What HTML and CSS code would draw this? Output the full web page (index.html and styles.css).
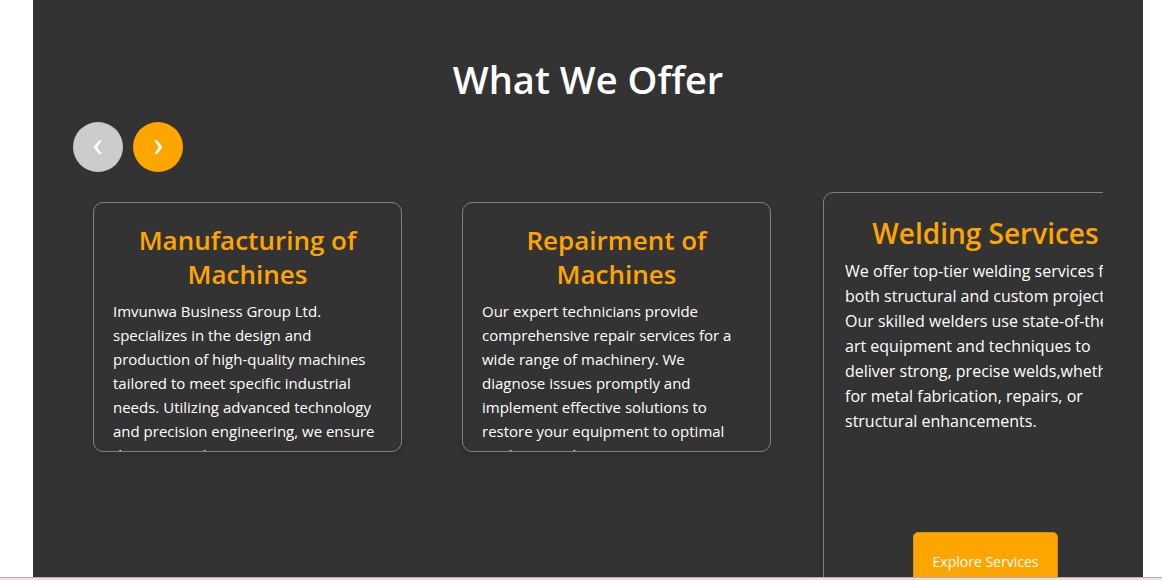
FILE: index.html
```html
<!DOCTYPE html>
<html lang="en">
<head>
<meta charset="utf-8">
<title>What We Offer</title>
<link rel="stylesheet" href="styles.css">
</head>
<body>
<main class="page">
  <section class="offer">
    <h2 class="offer-title">What We Offer</h2>
    <div class="controls">
      <button class="arrow arrow-off" type="button" aria-label="Previous">
        <svg width="10" height="16" viewBox="0 0 10 16"><path d="M6 1.3H8.8L4.2 8.2L8.8 15H6L1 8.8V7.6z"/></svg>
      </button>
      <button class="arrow" type="button" aria-label="Next">
        <svg width="10" height="16" viewBox="0 0 10 16"><path d="M4 1.3H1.2L5.8 8.2L1.2 15H4L9 8.8V7.6z"/></svg>
      </button>
    </div>
    <div class="track">
      <article class="card">
        <h3 class="card-title">Manufacturing of Machines</h3>
        <p class="card-text">Imvunwa Business Group Ltd.<br>specializes in the design and<br>production of high-quality machines<br>tailored to meet specific industrial<br>needs. Utilizing advanced technology<br>and precision engineering, we ensure<br>that our machines are</p>
      </article>
      <article class="card">
        <h3 class="card-title">Repairment of Machines</h3>
        <p class="card-text">Our expert technicians provide<br>comprehensive repair services for a<br>wide range of machinery. We<br>diagnose issues promptly and<br>implement effective solutions to<br>restore your equipment to optimal<br>working condition, minimizing</p>
      </article>
      <article class="card card-active">
        <h3 class="card-title">Welding Services</h3>
        <p class="card-text">We offer top-tier welding services for<br>both structural and custom projects.<br>Our skilled welders use state-of-the-<br>art equipment and techniques to<br>deliver strong, precise welds,whether<br>for metal fabrication, repairs, or<br>structural enhancements.</p>
        <button class="explore" type="button">Explore Services</button>
      </article>
    </div>
  </section>
</main>
<div class="edge"></div>
</body>
</html>
```
FILE: styles.css
```css
* { box-sizing: border-box; }
body {
  margin: 0;
  height: 100vh;
  display: flex;
  flex-direction: column;
  overflow: hidden;
  background: #fff;
  font-family: "Segoe UI", "Open Sans", "Noto Sans", sans-serif;
  color: #fff;
}
.page {
  flex: 1;
  min-height: 0;
  overflow: hidden;
  padding: 0 19px 0 33px;
}
.offer {
  background: #333;
  padding: 55px 40px 40px;
}
.offer-title {
  margin: 0;
  font-size: 38px;
  line-height: 48px;
  font-weight: 600;
  text-align: center;
}
.controls {
  display: flex;
  gap: 10px;
  margin-top: 19px;
}
.arrow {
  display: grid;
  place-items: center;
  width: 50px;
  height: 50px;
  padding: 0;
  border: 0;
  border-radius: 50%;
  background: orange;
}
.arrow svg { fill: #fff; }
.arrow-off { background: #ccc; }
.track {
  display: flex;
  align-items: flex-start;
  gap: 60px;
  overflow: hidden;
  margin-top: 10px;
  padding: 20px;
}
.card {
  flex: 0 0 309px;
  height: 250px;
  overflow: hidden;
  padding: 20px 19px;
  border: 1px solid #808080;
  border-radius: 10px;
  box-shadow: 0 4px 8px rgba(0, 0, 0, 0.1);
}
.card-title {
  margin: 0 0 8px;
  font-size: 26px;
  line-height: 34px;
  font-weight: 600;
  text-align: center;
  color: orange;
}
.card-text {
  margin: 0;
  font-size: 15px;
  line-height: 24px;
  white-space: nowrap;
}
.card-active {
  flex-basis: 325px;
  height: 420px;
  margin: -10px -8px;
  padding: 22px 21px;
  display: flex;
  flex-direction: column;
}
.card-active .card-title {
  font-size: 28px;
  line-height: 36px;
}
.card-active .card-text {
  font-size: 16px;
  line-height: 25px;
}
.explore {
  align-self: center;
  margin-top: 98px;
  padding: 19px;
  border: 1px solid #d68f10;
  border-radius: 5px;
  background: orange;
  color: #fff;
  font-family: inherit;
  font-size: 14px;
  line-height: 20px;
}
.edge {
  height: 3px;
  border-top: 1px solid #b9aeaa;
  background: #f2dfd1;
}
```
